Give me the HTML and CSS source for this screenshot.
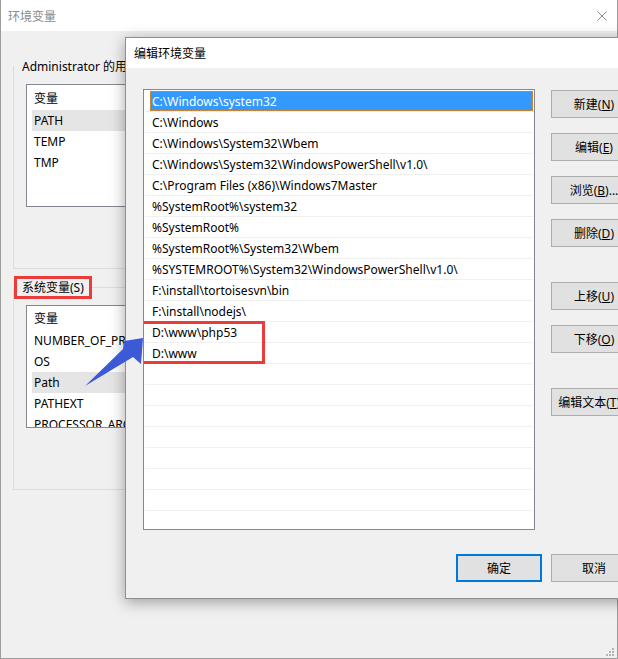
FILE: index.html
```html
<!DOCTYPE html>
<html lang="zh-CN">
<head>
<meta charset="utf-8">
<title>环境变量</title>
<link rel="stylesheet" href="styles.css">
</head>
<body>
<div class="win">
  <div class="titlebar">
    <span class="title">环境变量</span>
    <svg class="close" width="10" height="10" viewBox="0 0 10 10"><path d="M0.5 0.5 L9.5 9.5 M9.5 0.5 L0.5 9.5" stroke="#8a8a8a" stroke-width="1" fill="none"/></svg>
  </div>
  <div class="win-body">
    <fieldset class="group">
      <legend class="legend">Administrator 的用户变量(<u>U</u>)</legend>
      <div class="lv">
        <div class="lv-head user-head"><span class="c1">变量</span></div>
        <div class="lv-row sel"><span class="c1">PATH</span></div>
        <div class="lv-row"><span class="c1">TEMP</span></div>
        <div class="lv-row"><span class="c1">TMP</span></div>
      </div>
    </fieldset>
    <fieldset class="group sys">
      <legend class="legend mark">系统变量(S)</legend>
      <div class="lv">
        <div class="lv-head"><span class="c1">变量</span></div>
        <div class="lv-row"><span class="c1">NUMBER_OF_PROCESSORS</span></div>
        <div class="lv-row"><span class="c1">OS</span></div>
        <div class="lv-row sel"><span class="c1">Path</span></div>
        <div class="lv-row"><span class="c1">PATHEXT</span></div>
        <div class="lv-row"><span class="c1">PROCESSOR_ARCHITECTURE</span></div>
      </div>
    </fieldset>
  </div>
  <svg class="grip" width="8" height="8" viewBox="0 0 8 8"><g fill="#b4b4b4"><rect x="6" y="0" width="2" height="2"/><rect x="3" y="3" width="2" height="2"/><rect x="6" y="3" width="2" height="2"/><rect x="0" y="6" width="2" height="2"/><rect x="3" y="6" width="2" height="2"/><rect x="6" y="6" width="2" height="2"/></g></svg>
</div>

<div class="dlg">
  <div class="dlg-title">编辑环境变量</div>
  <div class="dlg-body">
    <div class="plist">
      <div class="prow edit"><span class="edit-box">C:\Windows\system32</span></div>
      <div class="prow">C:\Windows</div>
      <div class="prow">C:\Windows\System32\Wbem</div>
      <div class="prow">C:\Windows\System32\WindowsPowerShell\v1.0\</div>
      <div class="prow">C:\Program Files (x86)\Windows7Master</div>
      <div class="prow">%SystemRoot%\system32</div>
      <div class="prow">%SystemRoot%</div>
      <div class="prow">%SystemRoot%\System32\Wbem</div>
      <div class="prow">%SYSTEMROOT%\System32\WindowsPowerShell\v1.0\</div>
      <div class="prow">F:\install\tortoisesvn\bin</div>
      <div class="prow">F:\install\nodejs\</div>
      <div class="hl">
        <div class="prow">D:\www\php53</div>
        <div class="prow">D:\www</div>
      </div>
      <div class="prow"></div>
      <div class="prow"></div>
      <div class="prow"></div>
      <div class="prow"></div>
      <div class="prow"></div>
      <div class="prow"></div>
      <div class="prow"></div>
      <div class="prow"></div>
    </div>
    <div class="btns">
      <button class="btn">新建(<u>N</u>)</button>
      <button class="btn">编辑(<u>E</u>)</button>
      <button class="btn">浏览(<u>B</u>)...</button>
      <button class="btn">删除(<u>D</u>)</button>
      <button class="btn gap">上移(<u>U</u>)</button>
      <button class="btn">下移(<u>O</u>)</button>
      <button class="btn gap">编辑文本(<u>T</u>)...</button>
    </div>
    <div class="dlg-foot">
      <button class="btn primary">确定</button>
      <button class="btn">取消</button>
    </div>
  </div>
</div>

<svg class="arrow" width="66" height="56" viewBox="0 0 66 56"><polygon points="5,52 43,15 44,7 63,4 61,30 53,23" fill="#3c5ad6"/></svg>
</body>
</html>
```

FILE: styles.css
```css
*, *::before, *::after { box-sizing: border-box; }

body {
  margin: 0;
  width: 618px;
  height: 659px;
  overflow: hidden;
  position: relative;
  font-family: "Noto Sans", "Noto Sans CJK SC", sans-serif;
  font-size: 12px;
  color: #000;
  background: #f0f0f0;
}

.win {
  width: 618px;
  height: 659px;
  border: 1px solid #9d9d9d;
  border-top: 0;
  background: #f0f0f0;
  display: flex;
  flex-direction: column;
  position: relative;
}

.titlebar {
  height: 31px;
  flex: none;
  background: #fff;
  display: flex;
  align-items: center;
  justify-content: space-between;
  padding: 0 10px 0 7px;
}

.title { color: #8a8a8a; }

.win-body { padding: 0 0 0 12px; }

.group {
  margin: 24px 0 0 0;
  padding: 0 12px;
  border: 1px solid #dcdcdc;
  width: 590px;
  height: 214px;
  min-width: 0;
}

.sys { margin-top: 7px; }

.legend {
  padding: 0 5px;
  margin-left: -12px;
  border: 3px solid transparent;
  line-height: 17px;
}

.mark { border-color: #ec3b3b; }

.lv {
  margin-top: 6px;
  height: 123px;
  background: #fff;
  border: 1px solid #828790;
  overflow: hidden;
}

.lv-head {
  height: 24px;
  display: flex;
  align-items: center;
  padding-left: 7px;
}

.user-head { height: 25px; }

.lv-row {
  height: 21px;
  display: flex;
  align-items: center;
  margin-left: 5px;
  padding-left: 2px;
  white-space: nowrap;
}

.lv-row.sel { background: #e5e5e5; }

.c1 { width: 160px; flex: none; }

.grip { position: absolute; left: 605px; top: 648px; }

.dlg {
  position: absolute;
  left: 125px;
  top: 37px;
  width: 530px;
  height: 562px;
  border: 1px solid #8f8f8f;
  background: #f0f0f0;
  box-shadow: 0 3px 14px rgba(0, 0, 0, 0.35);
  display: flex;
  flex-direction: column;
}

.dlg-title {
  height: 30px;
  flex: none;
  background: #fff;
  padding-left: 8px;
  display: flex;
  align-items: center;
}

.dlg-body {
  padding: 21px 17px 0 17px;
  display: grid;
  grid-template-columns: 392px 86px;
  column-gap: 16px;
  align-items: start;
}

.plist {
  height: 441px;
  background: #fff;
  border: 1px solid #828790;
  padding-top: 1px;
  overflow: hidden;
}

.prow {
  height: 21px;
  margin: 0 1px;
  border-bottom: 1px solid #f0f0f0;
  padding-left: 7px;
  display: flex;
  align-items: center;
  white-space: nowrap;
}

.prow.edit { padding-left: 5px; }

.edit-box {
  flex: 1;
  height: 20px;
  display: flex;
  align-items: center;
  padding-left: 1px;
  background: #3399ff;
  color: #fff;
  border: 1px dotted #d9893a;
}

.hl { position: relative; }

.hl::after {
  content: "";
  position: absolute;
  left: -3px;
  top: -1px;
  width: 124px;
  height: 43px;
  border: 3px solid #ec3b3b;
}

.btns {
  display: flex;
  flex-direction: column;
  gap: 15px;
  padding-top: 1px;
}

.btn {
  height: 28px;
  width: 86px;
  border: 1px solid #adadad;
  background: #e1e1e1;
  font: inherit;
  color: #000;
  padding: 0;
  display: flex;
  align-items: center;
  justify-content: center;
  white-space: nowrap;
}

.btn.gap { margin-top: 20px; }

.btn.primary { border: 2px solid #0078d7; }

.dlg-foot {
  grid-column: 1 / -1;
  display: flex;
  justify-content: flex-end;
  gap: 9px;
  margin-top: 24px;
}

.arrow { position: absolute; left: 80px; top: 334px; }
```
